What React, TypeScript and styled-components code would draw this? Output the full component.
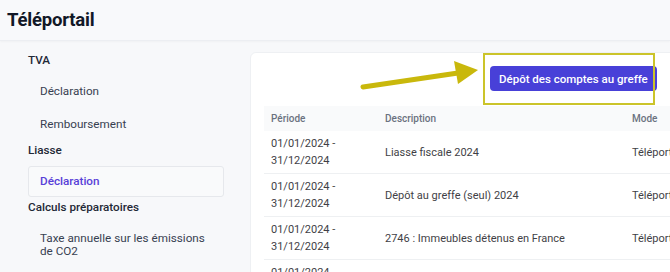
import React from 'react';
import styled, { createGlobalStyle } from 'styled-components';

const GlobalStyle = createGlobalStyle`
  html, body {
    margin: 0;
    padding: 0;
    overflow: hidden;
    background: #f7f8fa;
    font-family: Roboto, 'Liberation Sans', sans-serif;
    color: #1f2937;
  }
`;

interface Row {
  start: string;
  end: string;
  description: string;
  mode: string;
}

const rows: Row[] = [
  { start: '01/01/2024 -', end: '31/12/2024', description: 'Liasse fiscale 2024', mode: 'Téléportail' },
  { start: '01/01/2024 -', end: '31/12/2024', description: 'Dépôt au greffe (seul) 2024', mode: 'Téléportail' },
  { start: '01/01/2024 -', end: '31/12/2024', description: '2746 : Immeubles détenus en France', mode: 'Téléportail' },
  { start: '01/01/2024 -', end: '31/12/2024', description: '2561 : IFU', mode: 'Téléportail' },
];

const App: React.FC = () => {
  return (
    <Page>
      <GlobalStyle />
      <Header>
        <Title>Téléportail</Title>
      </Header>
      <Main>
        <Sidebar>
          <SectionTitle>TVA</SectionTitle>
          <SubItem>Déclaration</SubItem>
          <SubItem>Remboursement</SubItem>
          <SectionTitle>Liasse</SectionTitle>
          <SubItem active>Déclaration</SubItem>
          <SectionTitle>Calculs préparatoires</SectionTitle>
          <SubItem>Taxe annuelle sur les émissions de CO2</SubItem>
        </Sidebar>
        <Card>
          <Toolbar>
            <Button>Dépôt des comptes au greffe</Button>
            <Button>Nouvelle déclaration</Button>
          </Toolbar>
          <Table>
            <thead>
              <tr>
                <Th width={114}>Période</Th>
                <Th width={247}>Description</Th>
                <Th>Mode</Th>
              </tr>
            </thead>
            <tbody>
              {rows.map((row, i) => (
                <tr key={i}>
                  <Td>
                    {row.start}
                    <br />
                    {row.end}
                  </Td>
                  <Td>{row.description}</Td>
                  <Td>{row.mode}</Td>
                </tr>
              ))}
            </tbody>
          </Table>
        </Card>
      </Main>
      {/* annotation drawn over the screenshot */}
      <Highlight />
      <Arrow width="130" height="40" viewBox="0 0 130 40">
        <line x1="5" y1="31" x2="100" y2="17" stroke="#c9b80c" strokeWidth="5" strokeLinecap="round" />
        <polygon points="120,14 96,5 100,28" fill="#c9b80c" />
      </Arrow>
    </Page>
  );
};

const Page = styled.div`
  position: relative;
  width: 670px;
  height: 272px;
  overflow: hidden;
`;

const Header = styled.header`
  height: 40px;
  display: flex;
  align-items: center;
  padding-left: 7px;
  background: #f8f9fb;
  border-bottom: 1px solid #eceef2;
  box-shadow: 0 1px 2px rgba(0, 0, 0, 0.03);
`;

const Title = styled.h1`
  margin: 0;
  font-size: 18.5px;
  font-weight: 700;
  color: #111827;
  letter-spacing: -0.2px;
`;

const Main = styled.div`
  display: flex;
  align-items: flex-start;
`;

const Sidebar = styled.nav`
  width: 222px;
  flex: none;
  padding: 9px 0 0 28px;
  display: flex;
  flex-direction: column;
`;

const SectionTitle = styled.div`
  height: 20px;
  margin-bottom: 4px;
  display: flex;
  align-items: center;
  font-size: 11.7px;
  font-weight: 500;
  color: #1f2937;
`;

const SubItem = styled.div<{ active?: boolean }>`
  box-sizing: border-box;
  width: 196px;
  margin-top: 2px;
  padding: 8px 11px;
  font-size: 11.7px;
  line-height: 13px;
  font-weight: ${({ active }) => (active ? 500 : 400)};
  color: ${({ active }) => (active ? '#5840d8' : '#374151')};
  border: 1px solid ${({ active }) => (active ? '#e6e8ec' : 'transparent')};
  border-radius: 3px;
  background: ${({ active }) => (active ? '#f9fafb' : 'transparent')};
`;

const Card = styled.section`
  flex: none;
  width: 600px;
  margin-top: 11px;
  background: #ffffff;
  border: 1px solid #eef0f3;
  border-radius: 6px;
  padding: 13px 0 0 13px;
`;

const Toolbar = styled.div`
  display: flex;
  gap: 14px;
  padding-left: 226px;
  margin-bottom: 15px;
`;

const Button = styled.button`
  flex: none;
  height: 25px;
  padding: 0 9px;
  border: none;
  border-radius: 4px;
  background: #4840d8;
  color: #ffffff;
  font-family: Roboto, 'Liberation Sans', sans-serif;
  font-size: 11.5px;
  font-weight: 500;
  white-space: nowrap;
`;

const Table = styled.table`
  border-collapse: collapse;
  table-layout: fixed;
  width: 100%;
  font-size: 11px;
`;

const Th = styled.th<{ width?: number }>`
  box-sizing: border-box;
  width: ${({ width }) => (width ? `${width}px` : 'auto')};
  height: 25px;
  padding: 0 7px;
  text-align: left;
  font-size: 10px;
  font-weight: 500;
  color: #6b7280;
  background: #f9fafb;
`;

const Td = styled.td`
  height: 34px;
  padding: 4px 7px;
  line-height: 17px;
  color: #3f3f46;
  border-bottom: 1px solid #eef0f2;
  white-space: nowrap;
  overflow: hidden;
`;

const Highlight = styled.div`
  position: absolute;
  left: 483px;
  top: 53px;
  width: 168px;
  height: 48px;
  border: 2px solid #cbc42a;
`;

const Arrow = styled.svg`
  position: absolute;
  left: 358px;
  top: 56px;
`;

export default App;
